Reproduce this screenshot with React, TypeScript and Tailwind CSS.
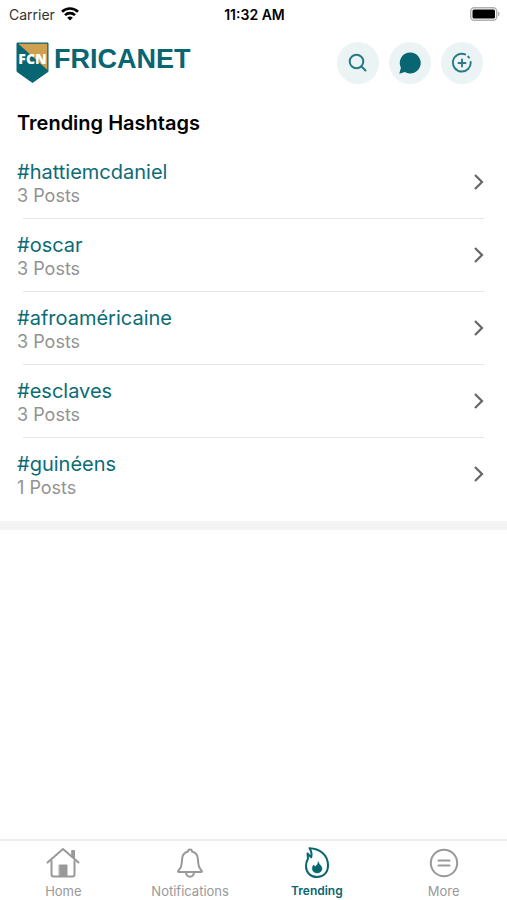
import React, { useState } from "react";

interface Hashtag {
  id: number;
  tag: string;
  posts: number;
}

interface Tab {
  id: string;
  label: string;
  icon: React.ReactNode;
}

const hashtags: Hashtag[] = [
  { id: 1, tag: "hattiemcdaniel", posts: 3 },
  { id: 2, tag: "oscar", posts: 3 },
  { id: 3, tag: "afroaméricaine", posts: 3 },
  { id: 4, tag: "esclaves", posts: 3 },
  { id: 5, tag: "guinéens", posts: 1 }
];

const HomeIcon = () => (
  <svg width="34" height="32" viewBox="0 0 34 32" fill="none" stroke="currentColor" strokeWidth="2" strokeLinecap="round" strokeLinejoin="round">
    <path d="M1.500 15.500L17 2l15.500 13.500" />
    <path d="M5.500 14v13.500a2 2 0 0 0 2 2h19a2 2 0 0 0 2-2V14" />
    <path d="M26 3.500h2.500V12L26 9.500z" fill="currentColor" strokeWidth="1" />
    <path d="M13.500 18h7.500v11.500h-7.500z" fill="currentColor" strokeWidth="1" />
  </svg>
);

const BellIcon = () => (
  <svg width="34" height="32" viewBox="0 0 34 32" fill="none" stroke="currentColor" strokeWidth="2" strokeLinecap="round" strokeLinejoin="round">
    <path d="M15 4.500a2 2 0 0 1 4 0c4 1 6 4 6 8.500 0 5 .5 7.500 3.500 10.500.8.8.5 1.500-.5 1.500H6c-1 0-1.300-.7-.5-1.500 3-3 3.500-5.500 3.500-10.500C9 8.500 11 5.500 15 4.500z" />
    <path d="M13 25.500c.3 2.800 1.800 4.200 4 4.200s3.700-1.400 4-4.200" />
  </svg>
);

const FlameIcon = () => (
  <svg width="34" height="32" viewBox="0 0 34 32" fill="none" stroke="currentColor" strokeWidth="2" strokeLinejoin="round">
    <path d="M9.500 1.200C19 1.500 28 7 28 18.500c0 7-4.500 11.500-11 11.500S6 25.500 6 19c0-3 1-5.500 2-7.500L7.500 6.500l3.700 3.800c.8-3 .3-6-1.700-9.100z" />
    <path d="M18.200 14.500c.3 2.700 3.800 4 3.800 7.200 0 2.500-2 4.300-4.800 4.300s-4.900-1.800-4.900-4.200c0-1.600.5-2.800 1.200-3.800l1.700 1.500c1.700-1.200 3-2.700 3-5z" fill="currentColor" strokeWidth="0.500" />
  </svg>
);

const MoreIcon = () => (
  <svg width="34" height="32" viewBox="0 0 34 32" fill="none" stroke="currentColor" strokeWidth="2" strokeLinecap="round">
    <circle cx="17" cy="16" r="13.200" />
    <path d="M11.500 13.500h11M11.500 18.500h11" />
  </svg>
);

const tabs: Tab[] = [
  { id: "home", label: "Home", icon: <HomeIcon /> },
  { id: "notifications", label: "Notifications", icon: <BellIcon /> },
  { id: "trending", label: "Trending", icon: <FlameIcon /> },
  { id: "more", label: "More", icon: <MoreIcon /> }
];

const StatusBar = () => (
  <div className="grid grid-cols-3 items-center h-7 pl-[9px] pr-[7px] text-[14px]">
    <div className="flex items-center gap-[6px] text-[#333]">
      <span>Carrier</span>
      <svg width="18" height="14" viewBox="0 0 18 14" fill="none" stroke="#000" strokeWidth="2.600">
        <path d="M1 4.800C5.500.4 12.500.4 17 4.800" />
        <path d="M4 8.200c2.800-2.800 7.200-2.800 10 0" />
        <path d="M9 13.500L6.200 10.700c1.600-1.500 4-1.500 5.600 0z" fill="#000" stroke="none" />
      </svg>
    </div>
    <span className="text-center font-semibold text-black">11:32 AM</span>
    <svg className="justify-self-end" width="30" height="14" viewBox="0 0 30 14">
      <rect x="0.700" y="0.700" width="26" height="12.600" rx="3.500" fill="none" stroke="#b0b0b0" strokeWidth="1.400" />
      <rect x="2.500" y="2.500" width="22.500" height="9" rx="1.500" fill="#000" />
      <path d="M28 4.500c2 .8 2 4.200 0 5z" fill="#b0b0b0" />
    </svg>
  </div>
);

const Logo = () => (
  <a href="#" className="flex items-start gap-[5px]" aria-label="Fricanet">
    <svg width="33" height="42" viewBox="0 0 33 42">
      <path d="M1 1h31v28.500L16.500 40.500 1 29.500z" fill="#076672" />
      <path d="M2 1.500h29.500V28z" fill="#cfa050" />
      <path d="M1 1h31v28.500L16.500 40.500 1 29.500z" fill="none" stroke="#076672" />
      <text x="16.500" y="22" textAnchor="middle" fontFamily="Open Sans, sans-serif" fontWeight="800" fontSize="14" fill="#fff">FCN</text>
    </svg>
    <span className="font-['Liberation_Sans',sans-serif] font-bold text-[27px] leading-[34px] text-[#076672]">FRICANET</span>
  </a>
);

const actionClass = "flex items-center justify-center w-[42px] h-[42px] rounded-full bg-[#ebf3f4] text-[#076672]";

const Header = () => (
  <header className="flex justify-between pl-4 pr-6 pt-[14px]">
    <Logo />
    <div className="flex gap-[10px]">
      <button className={actionClass} aria-label="Search">
        <svg width="22" height="22" viewBox="0 0 22 22" fill="none" stroke="currentColor" strokeWidth="2" strokeLinecap="round" opacity="0.850">
          <circle cx="9.500" cy="9.500" r="6.800" />
          <path d="M14.500 14.500l4 4" />
        </svg>
      </button>
      <button className={actionClass} aria-label="Messages">
        <svg width="22" height="22" viewBox="0 0 22 22" fill="currentColor">
          <path d="M11.200 0.500a10.500 10.500 0 1 1-5.400 19.500L.3 21.700l1.600-5.900A10.500 10.500 0 0 1 11.200.5z" />
        </svg>
      </button>
      <button className={actionClass} aria-label="Add">
        <svg width="22" height="22" viewBox="0 0 22 22" fill="none" stroke="currentColor" strokeWidth="1.900" strokeLinecap="round" opacity="0.850">
          <path d="M14.200 2.400A8.900 8.900 0 1 0 19.700 10" />
          <path d="M17.200 4.600a8.900 8.900 0 0 1 .8 1" />
          <path d="M11 7.500v7M7.500 11h7" />
        </svg>
      </button>
    </div>
  </header>
);

const App: React.FC = () => {
  const [activeTab, setActiveTab] = useState("trending");

  return (
    <div className="flex flex-col min-h-screen bg-white font-['Inter',sans-serif]">
      <StatusBar />
      <Header />

      <main className="flex-1">
        <h1 className="px-[17px] pt-[25px] pb-[9px] text-[20px] leading-7 font-semibold text-black">
          Trending Hashtags
        </h1>
        <ul className="pb-[11px] border-b-9 border-[#f4f4f4]">
          {hashtags.map((item, index) => (
            <li key={item.id}>
              <a href={`#${item.tag}`} className="flex items-center justify-between pl-[17px] pr-[22px] h-[72px]">
                <div className="pt-1">
                  <p className="text-[20px] leading-6 text-[#0b6b77]">#{item.tag}</p>
                  <p className="text-[18px] leading-6 text-[#929292]">{item.posts} Posts</p>
                </div>
                <svg width="12" height="18" viewBox="0 0 12 18" fill="none" stroke="#666" strokeWidth="2.200">
                  <path d="M2 2l7 7-7 7" />
                </svg>
              </a>
              {/* No divider after the last row */}
              {index < hashtags.length - 1 && <div className="ml-[23px] mr-[23px] h-px bg-[#e6e6e6]" />}
            </li>
          ))}
        </ul>
      </main>

      <nav className="grid grid-cols-4 h-[61px] border-t-2 border-[#ececec]">
        {tabs.map((tab) => (
          <button
            key={tab.id}
            onClick={() => setActiveTab(tab.id)}
            className={`flex flex-col items-center gap-[4px] pt-[6px] ${
              activeTab === tab.id ? "text-[#076672] text-[12px]/4 font-semibold" : "text-[#999] text-[13px]/4"
            }`}
          >
            {tab.icon}
            <span>{tab.label}</span>
          </button>
        ))}
      </nav>
    </div>
  );
};

export default App;
